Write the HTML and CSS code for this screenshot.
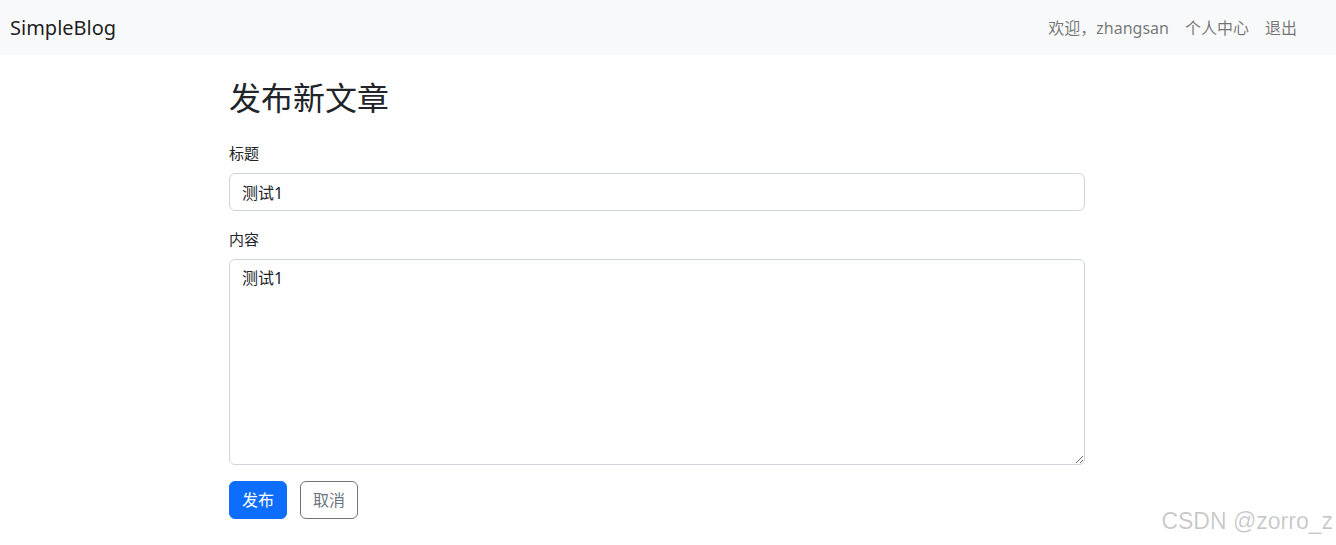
FILE: index.html
```html
<!DOCTYPE html>
<html lang="zh-CN">
<head>
<meta charset="utf-8">
<title>SimpleBlog - 发布新文章</title>
<link rel="stylesheet" href="styles.css">
</head>
<body>
<nav class="navbar">
  <a class="brand" href="#">SimpleBlog</a>
  <ul class="nav">
    <li><a class="nav-link" href="#">欢迎，zhangsan</a></li>
    <li><a class="nav-link" href="#">个人中心</a></li>
    <li><a class="nav-link" href="#">退出</a></li>
  </ul>
</nav>
<main class="container">
  <h2 class="title">发布新文章</h2>
  <form class="form">
    <div class="field">
      <label class="label" for="title">标题</label>
      <input class="control" id="title" type="text" value="测试1">
    </div>
    <div class="field">
      <label class="label" for="content">内容</label>
      <textarea class="control area" id="content" rows="8">测试1</textarea>
    </div>
    <div class="actions">
      <button class="btn btn-primary" type="submit">发布</button>
      <a class="btn btn-outline" href="#">取消</a>
    </div>
  </form>
</main>
<div class="watermark">CSDN @zorro_z</div>
</body>
</html>
```
FILE: styles.css
```css
* { box-sizing: border-box; }
html, body { margin: 0; padding: 0; }
body {
  font-family: "Noto Sans", "Noto Sans CJK SC", sans-serif;
  font-size: 16px;
  line-height: 1.5;
  color: #212529;
  background: #fff;
  position: relative;
  height: 545px;
  overflow: hidden;
}
.navbar {
  display: flex;
  align-items: center;
  justify-content: space-between;
  height: 55px;
  background: #f8f9fa;
  padding: 0 31px 0 10px;
}
.brand {
  font-size: 20px;
  line-height: 30px;
  color: rgba(0,0,0,.9);
  text-decoration: none;
}
.nav {
  display: flex;
  list-style: none;
  margin: 0;
  padding: 0;
}
.nav-link {
  display: block;
  padding: 8px;
  color: rgba(0,0,0,.55);
  text-decoration: none;
  line-height: 24px;
}
.container {
  width: 856px;
  margin: 24px 0 0 229px;
}
.title {
  font-size: 32px;
  font-weight: 400;
  line-height: 1.2;
  margin: 0 0 24px;
}
.field { margin-bottom: 16px; }
.label {
  display: inline-block;
  margin-bottom: 8px;
  font-size: 15px;
  line-height: 24px;
}
.control {
  display: block;
  width: 100%;
  padding: 6px 12px;
  font-family: inherit;
  font-size: 16px;
  line-height: 24px;
  color: #212529;
  background: #fff;
  border: 1px solid #ced4da;
  border-radius: 6px;
  height: 38px;
}
.area {
  height: 206px;
  resize: vertical;
}
.actions {
  display: flex;
  gap: 13px;
}
.btn {
  display: inline-block;
  height: 38px;
  padding: 6px 12px;
  font-family: inherit;
  font-size: 16px;
  line-height: 24px;
  border-radius: 6px;
  border: 1px solid transparent;
  text-decoration: none;
  cursor: pointer;
}
.btn-primary {
  background: #0d6efd;
  border-color: #0d6efd;
  color: #fff;
}
.btn-outline {
  background: #fff;
  border-color: #6c757d;
  color: #6c757d;
}
.watermark {
  position: absolute;
  right: 3px;
  bottom: 7px;
  font-family: "Liberation Sans", Arial, sans-serif;
  font-size: 23px;
  color: rgba(0,0,0,.22);
  text-shadow: 0 1px 1px rgba(255,255,255,.8);
  white-space: nowrap;
}
```
